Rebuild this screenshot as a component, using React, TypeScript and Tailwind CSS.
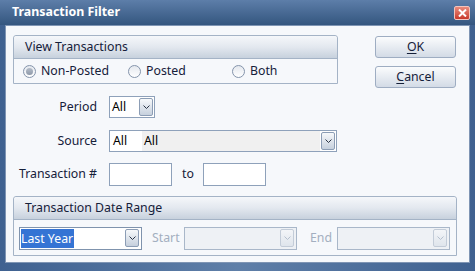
import React from "react";

const font = { fontFamily: '"Noto Sans", "Open Sans", sans-serif' };

const Chevron = ({ light = false }: { light?: boolean }) => (
  <svg width="7" height="4" viewBox="0 0 7 4">
    <path d="M0.5 0.5 L3.5 3.5 L6.5 0.5" fill="none" stroke={light ? "#b4bfcd" : "#2a3445"} strokeWidth="1" />
  </svg>
);

const DropButton = ({ disabled = false }: { disabled?: boolean }) => (
  <div
    className={
      "flex h-[18px] w-[14px] items-center justify-center rounded-[2px] border " +
      (disabled
        ? "border-[#c3ccd8] bg-gradient-to-b from-[#f3f5f8] to-[#dfe5ec]"
        : "border-[#8c9db5] bg-gradient-to-b from-[#f7f9fb] to-[#c6d0dd]")
    }
  >
    <Chevron light={disabled} />
  </div>
);

const Radio = ({ label, checked = false }: { label: string; checked?: boolean }) => (
  <div className="flex items-center gap-[5px]">
    <div className="flex h-[13px] w-[13px] items-center justify-center rounded-full border border-[#8494ab] bg-gradient-to-b from-[#e4e8ee] to-white">
      {checked && <div className="h-[7px] w-[7px] rounded-full bg-gradient-to-b from-[#b5bdc9] to-[#8e99a9]" />}
    </div>
    <span className="text-[12.3px] text-[#15203a]">{label}</span>
  </div>
);

const GroupHeader = ({ title }: { title: string }) => (
  <div className="flex h-[23px] items-center rounded-t-[3px] border-b border-[#a4b3c6] bg-gradient-to-b from-[#f5f7fa] via-[#e3e8ef] to-[#c7d1dd] pl-[11px] text-[12.3px] text-[#15203a]">
    {title}
  </div>
);

const Button = ({ first, rest }: { first: string; rest: string }) => (
  <button className="flex h-[22px] w-[81px] shrink-0 items-center justify-center rounded-[3px] border border-[#9eadc2] bg-gradient-to-b from-[#fbfcfd] to-[#d3dbe6] text-[12.3px] text-[#15203a]">
    <span className="underline underline-offset-2">{first}</span>
    {rest}
  </button>
);

export default function App() {
  return (
    <div className="flex h-[271px] w-[475px] flex-col bg-gradient-to-r from-[#3f6190] via-[#5f7fa8] to-[#3f6190]" style={font}>
      {/* title bar */}
      <div className="flex h-[25px] items-center justify-between bg-gradient-to-b from-[#5d7ea9] to-[#34567f] pl-[12px] pr-[5px]">
        <span className="text-[12.4px] font-bold text-white">Transaction Filter</span>
        <div className="flex h-[14px] w-[16px] items-center justify-center rounded-[2px] border border-[#f3c4bd] bg-gradient-to-b from-[#e88a7c] to-[#c8372a]">
          <svg width="9" height="8" viewBox="0 0 9 8">
            <path d="M1 0.5 L8 7.5 M8 0.5 L1 7.5" stroke="white" strokeWidth="2" />
          </svg>
        </div>
      </div>

      {/* client */}
      <div className="mx-[5px] mb-[8px] flex-1 border border-[#7f95b4] bg-[#f6f8fb] pl-[7px] pt-[9px]">
        <div className="flex h-[49px] items-start">
          <div className="h-[49px] w-[325px] rounded-t-[3px] border border-[#a4b3c6] bg-[#f6f8fb]">
            <GroupHeader title="View Transactions" />
            <div className="flex h-[24px] items-center pl-[9px]">
              <div className="w-[105px]">
                <Radio label="Non-Posted" checked />
              </div>
              <div className="w-[104px]">
                <Radio label="Posted" />
              </div>
              <Radio label="Both" />
            </div>
          </div>
          <div className="ml-[37px] flex flex-col gap-[8px] pt-[1px]">
            <Button first="O" rest="K" />
            <Button first="C" rest="ancel" />
          </div>
        </div>

        <div className="mt-[12px] flex items-center">
          <span className="w-[85px] pr-[1px] text-right text-[12.3px] text-[#15203a]">Period</span>
          <div className="ml-[11px] flex h-[22px] w-[46px] items-center justify-between border border-[#8ea1ba] bg-white pl-[2px] pr-[1px]">
            <span className="text-[12.3px] text-black">All</span>
            <DropButton />
          </div>
        </div>

        <div className="mt-[12px] flex items-center">
          <span className="w-[85px] pr-[1px] text-right text-[12.3px] text-[#15203a]">Source</span>
          <div className="ml-[11px] flex h-[22px] w-[228px] items-center border border-[#8ea1ba] bg-white pl-[3px] pr-[1px]">
            <span className="w-[29px] text-[12.3px] text-black">All</span>
            <div className="flex h-full flex-1 items-center bg-[#f0f0f0] pl-[2px] text-[12.3px] text-black">All</div>
            <div className="ml-[1px]">
              <DropButton />
            </div>
          </div>
        </div>

        <div className="mt-[11px] flex items-center">
          <span className="w-[85px] pr-[1px] text-right text-[12.3px] text-[#15203a]">Transaction #</span>
          <div className="ml-[11px] h-[23px] w-[63px] border border-[#8ea1ba] bg-white" />
          <span className="ml-[10px] w-[21px] text-[12.3px] text-[#15203a]">to</span>
          <div className="h-[23px] w-[63px] border border-[#8ea1ba] bg-white" />
        </div>

        <div className="mt-[10px] h-[60px] w-[444px] rounded-t-[3px] border border-[#a4b3c6] bg-[#f6f8fb]">
          <GroupHeader title="Transaction Date Range" />
          <div className="flex h-[36px] items-center pl-[5px]">
            <div className="flex h-[23px] w-[123px] items-center justify-between border border-[#7f93ad] bg-white pl-[1px] pr-[2px]">
              <span className="bg-[#3574d4] pr-[1px] text-[12.3px] leading-[19px] text-white">Last Year</span>
              <DropButton />
            </div>
            <span className="ml-[10px] w-[32px] text-[12.3px] text-[#a3afc0]">Start</span>
            <div className="flex h-[23px] w-[113px] items-center justify-end border border-[#a9b7c9] bg-[#eef1f5] pr-[2px]">
              <DropButton disabled />
            </div>
            <span className="ml-[13px] w-[27px] text-[12.3px] text-[#a3afc0]">End</span>
            <div className="flex h-[23px] w-[113px] items-center justify-end border border-[#a9b7c9] bg-[#eef1f5] pr-[2px]">
              <DropButton disabled />
            </div>
          </div>
        </div>
      </div>
    </div>
  );
}
